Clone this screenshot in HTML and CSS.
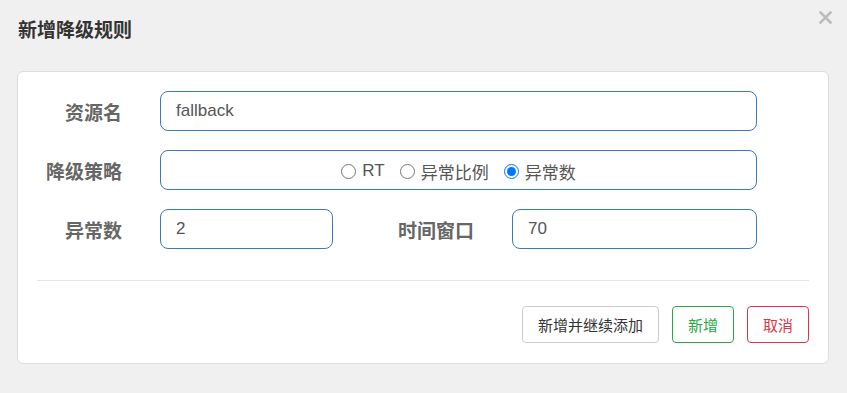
FILE: index.html
```html
<!DOCTYPE html>
<html lang="zh-CN">
<head>
    <meta charset="UTF-8">
    <meta name="viewport" content="width=device-width, initial-scale=1.0">
    <title>新增降级规则</title>
    <link rel="stylesheet" href="styles.css">
</head>
<body>
    <!-- Dialog header -->
    <div class="dialog-header">
        <h1 class="dialog-title">新增降级规则</h1>
        <button class="close-btn" type="button" aria-label="关闭">
            <svg width="13" height="13" viewBox="0 0 13 13">
                <path d="M1.5 1.5 L11.5 11.5 M11.5 1.5 L1.5 11.5" stroke="#bcbcbc" stroke-width="2.6" stroke-linecap="square"/>
            </svg>
        </button>
    </div>

    <!-- Form card -->
    <div class="card">
        <div class="form-rows">
            <div class="form-row">
                <label class="form-label">资源名</label>
                <input class="form-input" type="text" value="fallback">
            </div>
            <div class="form-row">
                <label class="form-label">降级策略</label>
                <div class="radio-box">
                    <label class="radio-item"><input type="radio" name="grade"> RT</label>
                    <label class="radio-item"><input type="radio" name="grade"> 异常比例</label>
                    <label class="radio-item"><input type="radio" name="grade" checked> 异常数</label>
                </div>
            </div>
            <div class="form-row form-row-split">
                <label class="form-label">异常数</label>
                <input class="form-input" type="text" value="2">
                <label class="form-label">时间窗口</label>
                <input class="form-input" type="text" value="70">
            </div>
        </div>

        <hr class="divider">

        <div class="actions">
            <button class="btn btn-default" type="button">新增并继续添加</button>
            <button class="btn btn-success" type="button">新增</button>
            <button class="btn btn-danger" type="button">取消</button>
        </div>
    </div>
</body>
</html>
```

FILE: styles.css
```css
/* Page */
body {
    margin: 0;
    background-color: #f0f0f0;
    font-family: "Liberation Sans", "Noto Sans CJK SC", sans-serif;
    color: #333;
    height: 393px;
    overflow: hidden;
}

/* Header with title and close icon */
.dialog-header {
    display: flex;
    justify-content: space-between;
    align-items: flex-start;
    height: 62px;
    padding: 0 15px 0 18px;
    margin-bottom: 9px;
}

.dialog-title {
    margin: 0;
    font-size: 19px;
    line-height: 62px;
    font-weight: bold;
    color: #333;
}

.close-btn {
    margin-top: 11px;
    padding: 0;
    border: none;
    background: none;
    cursor: pointer;
    line-height: 0;
}

/* White card holding the form */
.card {
    margin: 0 18px 0 17px;
    padding: 19px 19px 20px;
    background-color: #fff;
    border: 1px solid #ddd;
    border-radius: 6px;
}

.form-rows {
    display: flex;
    flex-direction: column;
    gap: 19px;
    margin-right: 52px;
}

.form-row {
    display: grid;
    grid-template-columns: 85px 1fr;
    column-gap: 38px;
    align-items: center;
}

.form-row-split {
    grid-template-columns: 85px 173px 1fr 245px;
}

.form-label {
    text-align: right;
    font-size: 19px;
    font-weight: bold;
    color: #666;
}

.form-input,
.radio-box {
    box-sizing: border-box;
    height: 40px;
    border: 1px solid #3a7bbf;
    border-radius: 8px;
    background-color: #fff;
}

.form-input {
    width: 100%;
    padding: 0 15px;
    font-family: inherit;
    font-size: 17px;
    color: #555;
    outline: none;
}

/* Radio group */
.radio-box {
    display: flex;
    justify-content: center;
    align-items: center;
    gap: 15px;
    padding-top: 2px;
}

.radio-item {
    display: flex;
    align-items: center;
    font-size: 17px;
    color: #555;
}

.radio-item input {
    margin: 0 6px 0 0;
    width: 15px;
    height: 15px;
}

/* Divider line above buttons */
.divider {
    margin: 31px 0 25px;
    border: none;
    border-top: 1px solid #e5e5e5;
}

/* Footer buttons */
.actions {
    display: flex;
    justify-content: flex-end;
    gap: 13px;
}

.btn {
    height: 37px;
    padding: 0 15px;
    background-color: #fff;
    border: 1px solid #ccc;
    border-radius: 4px;
    font-family: inherit;
    font-size: 15px;
    cursor: pointer;
}

.btn-default {
    color: #333;
}

.btn-success {
    color: #28a745;
    border-color: #28a745;
}

.btn-danger {
    color: #dc3545;
    border-color: #dc3545;
}
```
